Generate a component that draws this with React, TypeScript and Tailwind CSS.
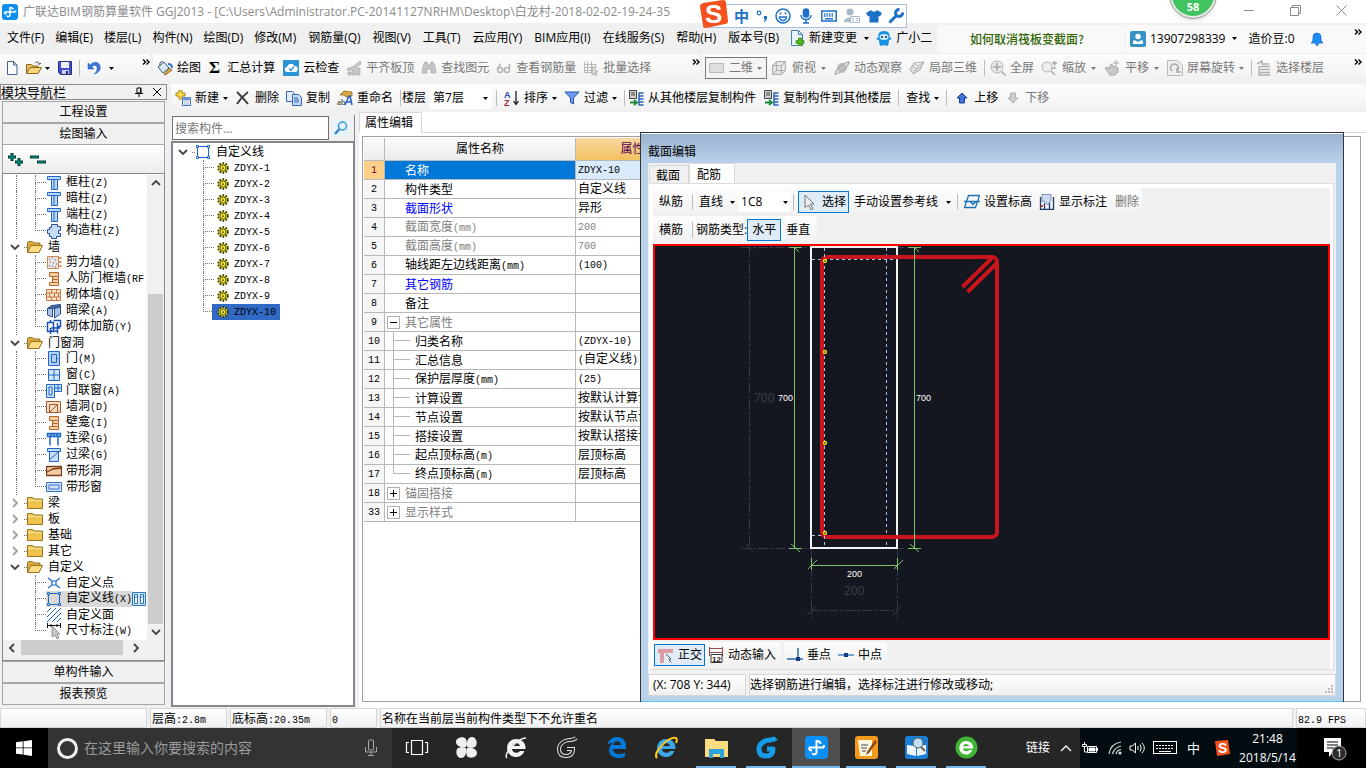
import type { ReactNode } from 'react'

type Row = {
  no: number
  name: string
  value?: string
  tone?: 'blue' | 'gray'
  child?: boolean
  last?: boolean
  sign?: '+' | '-'
}

type Leaf = { label: string; icon: string; active?: boolean }
type Group = { label?: string; open?: boolean; line?: boolean; items: Leaf[] }

const S = '#1e66c8'

const icons: Record<string, ReactNode> = {
  app: (
    <>
      <rect width="16" height="16" rx="3" fill="#0d8ff0" />
      <path d="M8 3v8c0 2-3 2-3 .5M8 3.500c2 0 3 .8 3 2M2.500 8h11M2.500 8c0 1.500 1 2 2 2M13.500 8V6.500" stroke="#fff" strokeWidth="1.500" fill="none" />
    </>
  ),
  file: <path d="M3.500 1.500h6l3.500 3.500v9.500H3.500zM9.500 1.500V5H13" fill="#fbfdff" stroke="#44618f" />,
  open: (
    <>
      <path d="M.5 13.500v-9h5l1.500 1.500h5v2" fill="#e9bd55" stroke="#8c6a1c" />
      <path d="M.5 13.500l3.500-6h11.500l-3.500 6z" fill="#f6d77b" stroke="#8c6a1c" />
      <path d="M9 3c2-2 4-1 4.500 1M12 3.500l1.500 1L15 3" fill="none" stroke="#555" />
    </>
  ),
  folderOpen: (
    <>
      <path d="M.5 13.500v-10l1-1h4l1.500 1.500h6v4" fill="#dca93c" stroke="#99741f" />
      <path d="M.5 13.500l3.500-7h11.500l-3.500 7z" fill="#f9dc84" stroke="#99741f" />
    </>
  ),
  save: (
    <>
      <path d="M1.500 1.500h13v13h-11l-2-2z" fill="#4652c4" stroke="#2a2f86" />
      <path d="M4 2h8v6H4z" fill="#eef1fb" />
      <path d="M5 10h7v4H5z" fill="#c9d0ea" />
      <path d="M9 11h2v3H9z" fill="#2a2f86" />
    </>
  ),
  undo: <path d="M2 3v6h6L5.800 6.800C8 4.500 12 5 11 9.500c-.3 2-1.500 3.500-3 4.500 4.500-1 7-4 6-8C13 1.500 7.500 1 4.200 5z" fill="#3c78dc" stroke="#1f4fa8" strokeWidth=".5" />,
  paint: (
    <>
      <path d="M1 7l6-5 5 6-6 5z" fill="#dbe6f3" stroke="#38587d" />
      <path d="M3 6c-1-4 2-6 4-3" stroke="#38587d" fill="none" />
      <path d="M8 13l5-5 2 2-5 4-3 1z" fill="#dca23a" stroke="#7b5a18" strokeWidth=".7" />
      <path d="M11 4c3 0 4 2 4 4" stroke="#3075d6" strokeWidth="2" fill="none" />
    </>
  ),
  cloud: (
    <>
      <rect width="16" height="16" fill="#2a94d6" />
      <path d="M4.500 12a2.500 2.500 0 0 1-.5-5 4 4 0 0 1 7.500-1A3 3 0 0 1 12 12z" fill="#fff" />
      <path d="M6 8.500l2 2 3-4" stroke="#2a94d6" fill="none" strokeWidth="1.300" />
    </>
  ),
  align: <path d="M1 9l7-3 6-5 1 3-6 4-7 3zM2 12h3v3H2zM6 10h3v5H6zM10 8h4v7h-4z" fill="#c6c6c6" stroke="#aaa" strokeWidth=".7" />,
  bino: <path d="M2 6l2-4h2l1 3h2l1-3h2l2 4 1 7h-5V9H6v4H1z" fill="#c4c4c4" stroke="#a8a8a8" strokeWidth=".7" />,
  glasses: (
    <g fill="none" stroke="#b4b4b4" strokeWidth="1.500">
      <circle cx="4" cy="10" r="2.500" />
      <circle cx="11" cy="10" r="2.500" />
      <path d="M6.500 10h2M1.500 9l3-5M13.500 9V4" />
    </g>
  ),
  batch: (
    <>
      <path d="M1.500 1.500v11h9M1.500 4.500h12M1.500 7.500h12M1.500 10.500h9M4.500 1.500v11M8.500 1.500v11M12.500 4v4" stroke="#b9b9b9" fill="none" />
      <path d="M9 6l6 6h-3l2 3-1.500.8L11 13l-2 2z" fill="#ddd" stroke="#999" strokeWidth=".7" />
    </>
  ),
  flat: <path d="M.5 3.500h14v9H.5z" fill="#dedede" stroke="#b9b9b9" />,
  cube: <path d="M1.500 5.500l4-4h9v9l-4 4h-9zM1.500 5.500h9v9M10.500 5.500l4-4M5.500 1.500v9h9M5.500 10.500l-4 4" fill="#e4e4e4" stroke="#adadad" />,
  planet: (
    <>
      <circle cx="8" cy="8" r="5" fill="#c2c2c2" />
      <path d="M1 14C4 15 15 6 15 2c-3 0-12 5-14 12z" fill="none" stroke="#aaa" strokeWidth="1.300" />
    </>
  ),
  local: <path d="M1 9l4-6 10-1-4 8-7 4zM5 3l4 3 6-4M9 6l-4 8M3 6l5 3 5-3" fill="#ddd" stroke="#b0b0b0" />,
  full: (
    <>
      <circle cx="7" cy="7" r="6" fill="#e9e9e9" stroke="#b4b4b4" />
      <path d="M7 3v8M3 7h8M11.500 11.500l4 4" stroke="#a6a6a6" strokeWidth="1.500" />
    </>
  ),
  zoom: (
    <>
      <circle cx="6" cy="7" r="5" fill="#ededed" stroke="#b4b4b4" />
      <path d="M10 11l4 4M11 3h5M13.500 1v5M11 8h4" stroke="#aaa" strokeWidth="1.500" />
    </>
  ),
  hand: <path d="M1 8l3-1 2 2V5l2-1 1 3 2-1 3 2v4l-3 3H6zM9 3h6M12 0v6" fill="#c8c8c8" stroke="#aaa" />,
  rotate: (
    <>
      <path d="M.5.5h10l5 5v10H.5z" fill="#eee" stroke="#b9b9b9" />
      <path d="M5 11a4 4 0 1 1 5 0M10 8v4h4" stroke="#a6a6a6" strokeWidth="1.500" fill="none" />
    </>
  ),
  floors: <path d="M1 4l5-3v3h7M4 6.500h10M4 9.500h10M4 12.500h10M3 6v9h11" fill="none" stroke="#b0b0b0" strokeWidth="1.500" />,
  create: (
    <>
      <path d="M4 0h3v3h3v3H7v3H4V6H1V3h3z" fill="#ffe14a" stroke="#957200" strokeWidth=".8" />
      <path d="M7.500 7.500h8v8h-8z" fill="#fff" stroke="#3b6fc0" />
      <path d="M8 8h7v2H8zM9 12h5M9 14h5" fill="#3b6fc0" stroke="#8fb0e2" />
    </>
  ),
  del: <path d="M2 2c3 3 7 7 11 12M13 2C9 5 5 9 2 14" stroke="#3b3b3b" strokeWidth="1.800" fill="none" />,
  copy: (
    <>
      <path d="M.5 1.500h6l2 2v8h-8z" fill="#e3edfb" stroke="#3565b5" />
      <path d="M6.500 4.500h6l3 3v8h-9zM8 8h4M8 10h5M8 12h5" fill="#c9dcf8" stroke="#3565b5" />
    </>
  ),
  rename: (
    <>
      <path d="M3 5l4-4 8 1v4l-6 1-2-2z" fill="#d9a640" stroke="#7d5913" strokeWidth=".7" />
      <text x="0" y="15" fontSize="9" fontFamily="Liberation Serif" fill="#222">ab</text>
      <path d="M8 15l4-9h1l2 9M10 12h4" stroke="#2c62c4" strokeWidth="1.600" fill="none" />
    </>
  ),
  sort: (
    <>
      <text x="0" y="8" fontSize="9" fontWeight="700" fontFamily="Liberation Sans" fill="#2346a5">A</text>
      <text x="0" y="16" fontSize="9" fontWeight="700" fontFamily="Liberation Sans" fill="#a03030">Z</text>
      <path d="M12 1v13M9.500 11l2.500 3.500 2.500-3.500" stroke="#111" fill="none" strokeWidth="1.200" />
    </>
  ),
  filter: <path d="M1 2h14L9.500 8v6l-3-1.500V8z" fill="#6b9df0" stroke="#2455ae" />,
  fromFloor: (
    <>
      <path d="M1.500.5h7v8h-7zM3 3h4M3 5h4" fill="#d2d2d2" stroke="#444" />
      <path d="M2 12.500h6M6 10l3 2.500L6 15" stroke="#1b8c3e" strokeWidth="1.800" fill="none" />
      <path d="M11 3h4.500M11 6h4.500M11 9h4.500M11 12h4.500M11 15h4.500M11 2.500v13" stroke="#2b62b8" strokeWidth="1.500" />
    </>
  ),
  up: <path d="M8 3l5 5h-2.500v5h-5V8H3z" fill="#3d74dd" stroke="#173f8e" />,
  down: <path d="M8 13l5-5h-2.500V3h-5v5H3z" fill="#cfcfcf" stroke="#b0b0b0" />,
  change: (
    <>
      <path d="M2.500.5h7l4 4v11h-11zM9.500.5v4h4" fill="#eaf4fc" stroke="#3f83b7" />
      <path d="M9.500 8h3v2.500H15v3h-2.500V16h-3v-2.500H7v-3h2.500z" fill="#53b61b" stroke="#2b7c09" strokeWidth=".6" />
    </>
  ),
  mascot: (
    <>
      <path d="M8 1c5 0 6 3 5.500 6L16 9l-3 1c0 3-1 6-2 6l-3-1-3 1c-1 0-2-3-2-6L0 9l2.500-2C2 4 3 1 8 1z" fill="#1793e0" />
      <ellipse cx="8" cy="7" rx="4.500" ry="3" fill="#c9ecff" />
      <circle cx="6" cy="7" r="1" fill="#134" />
      <circle cx="10" cy="7" r="1" fill="#134" />
    </>
  ),
  user: (
    <>
      <rect width="16" height="16" rx="2" fill="#3593c6" />
      <circle cx="8" cy="5.500" r="2.700" fill="#fff" />
      <path d="M3 13V9.500h2.500L8 11l2.500-1.500H13V13z" fill="#fff" />
    </>
  ),
  bell: <path d="M2 12c2-1 2-3 2-6a4 4 0 0 1 8 0c0 3 0 5 2 6H10l-2 3-2-3z" fill="#1f8cf5" stroke="#1463c4" strokeWidth=".7" />,
  column: <path d="M1.500 1.500h13v3h-3v10h-6v-10h-4zM6 4.500h5M8 5v9" fill="#bdd6fb" stroke={S} />,
  tectonic: <path d="M5.500 1.500h6v2h3v4h-2v3h2v3h-4v2h-5v-2h-2v-3h-2v-4h2v-2h2z" fill="#c6dcfb" stroke="#2a4f9a" />,
  shear: (
    <>
      <path d="M1.500 1.500h11v12h-11z" fill="#e9e4df" stroke="#c98a5a" />
      <path d="M3 4h1M6 3h1M9 5h1M4 7h1M7 8h1M10 9h1M3 11h1M6 11h1M9 12h1" stroke="#555" />
      <path d="M13 3h2.500M13 7h2.500M13 11h2.500" stroke="#e07030" strokeWidth="1.500" />
    </>
  ),
  frame: <path d="M3.500 1.500h9v13h-9v-3h3v-6h-3zM6.500 5.500h5M6.500 8.500h5M6.500 11.500h5" fill="#f5cfa5" stroke="#b3622a" />,
  brick: <path d="M.5 2.500h14v11H.5zM.5 6h14M.5 10h14M5.500 2.500V6M10.500 2.500V6M3.500 6v4M8.500 6v4M12.500 6v4M5.500 10v3.500M10.500 10v3.500" fill="#fbe2c8" stroke="#c47844" />,
  hidden: (
    <>
      <path d="M1.500 5.500l4-3 9-1v3l-9 1.500z" fill="#41699f" stroke="#2c4f86" />
      <path d="M1.500 5.500h5v8.500l-5-2zM8.500 5.500l6-1.500v7l-6 4z" fill="#a9c4ea" stroke="#2c4f86" />
    </>
  ),
  rebar: <path d="M1.500 3.500h6v9h-6zM4.500 1v3M4.500 9v6M7.500 1.500h7v6h-3v7M11.500 4v8h-8M14 9H5" fill="none" stroke="#1a4fb4" strokeWidth="1.500" />,
  door: <path d="M2.500.5h11v14h-11zM5.500 3.500h5v8h-5zM10 7.500h2" fill="#b3d0fa" stroke={S} />,
  window: <path d="M2.500 2.500h11v11h-11zM8 2.500v11M2.500 8h11" fill="#d3e5fd" stroke={S} />,
  doorWin: <path d="M.5 1.500h8v13h-8zM3 4h3v8H3zM8.500 1.500h7v7h-7zM12 1.500v7M8.500 5h7" fill="#cfe2fc" stroke={S} />,
  hole: <path d="M.5 2.500h14v11H.5zM3.500 5.500h8v8h-8zM4 13l7-7" fill="#f8dcc2" stroke="#9c5a30" />,
  link: <path d="M1.500 2.500h13v3h-13zM4 5.500v9M12 5.500v9M5 2.500v3M8 2.500v3M11 2.500v3" fill="#9fc3f7" stroke={S} strokeWidth="1.500" />,
  lintel: <path d="M1.500 1.500h13v3h-13zM3.500 4.500h9v10h-9zM4 12l4-3 4-4" fill="#c7dcfb" stroke={S} />,
  stripHole: <path d="M.5 3.500h15v9H.5zM1 9l6-3 8-1" fill="#f3c9a4" stroke="#7a4018" strokeWidth="1.300" />,
  stripWin: <path d="M.5 3.500h15v9H.5zM3 6h10v4H3z" fill="#cfe1fb" stroke="#3b6fc8" />,
  folder: (
    <>
      <path d="M.5 13.500v-11h5l1.500 1.500h8.500v9.500z" fill="#f0c34e" stroke="#99741f" />
      <path d="M1 5.500h14" stroke="#fbe7a6" />
    </>
  ),
  point: <path d="M2 3l4 3M14 3l-4 3M2 13l4-3M14 13l-4-3M6 6h4v4H6z" stroke={S} fill="none" strokeWidth="1.200" />,
  line: (
    <>
      <path d="M2.500 2.500h11v11h-11z" fill="none" stroke={S} />
      <path d="M1.500 1.500h2v2h-2zM12.500 1.500h2v2h-2zM1.500 12.500h2v2h-2zM12.500 12.500h2v2h-2z" fill="#fff" stroke={S} />
    </>
  ),
  area: <path d="M1 5l4-4M1 10l9-9M1 15L15 1M6 15l9-9M11 15l4-4" stroke={S} fill="none" />,
  dim: (
    <>
      <path d="M1 2.500h14M1.500 0v5M14.500 0v5M5 1v3M11 1v3" stroke="#111" />
      <path d="M6 3l8 8h-3l2 4-2 1-2-4-3 2z" fill="#c9c9c9" stroke="#777" strokeWidth=".7" />
    </>
  ),
  gear: (
    <>
      <circle cx="8" cy="8" r="5.500" fill="#f2ef2f" stroke="#33330a" strokeWidth="2" strokeDasharray="2 1.500" />
      <circle cx="8" cy="8" r="3.500" fill="#f2ef2f" stroke="#33330a" />
      <circle cx="8" cy="8" r="1" fill="#222" />
    </>
  ),
  cursor: <path d="M3 1l9 9H8.500l2.500 5-2 .8L6.700 11 3 13.500z" fill="#f0f0f0" stroke="#777" />,
  elev: <path d="M4.500 1.500h11l-4 12H.5zM0 7.500h16M6 7.500h6l-3 3z" fill="none" stroke="#1d73b8" strokeWidth="1.300" />,
  mark: (
    <>
      <path d="M1.500 3v12.500h13V3M5.500 9v6M10.500 9v6" fill="none" stroke="#1c3f6e" strokeWidth="1.300" />
      <path d="M3 .5h9v6L8.500 11 6 7.500H3z" fill="#cddcf2" stroke="#7d93b8" />
      <path d="M2 11h2v2H2z" fill="#d3441c" />
    </>
  ),
  ortho: (
    <>
      <path d="M0 2h15v4H6v10H2V6H0z" fill="#dc9ca0" />
      <path d="M8 7l5 5-2 .5 2 3" stroke="#555" fill="none" />
    </>
  ),
  dyn: (
    <>
      <path d="M1 1.500h14M1 5.500h14M1.500 0v9M14.500 0v9" stroke="#8e4c4c" />
      <path d="M3 7.500h11v8H3z" fill="#fff" stroke="#333" />
      <text x="4" y="15" fontSize="8" fontWeight="700" fontFamily="Liberation Sans" fill="#111">12</text>
    </>
  ),
  perp: (
    <>
      <path d="M11 1v11M0 12h16" stroke="#2a69ad" strokeWidth="1.500" />
      <path d="M9 10h4v4H9z" fill="#123b86" />
    </>
  ),
  mid: (
    <>
      <path d="M0 8h16" stroke="#4a86c8" strokeWidth="1.500" />
      <path d="M6 6h4v4H6z" fill="#123b86" />
    </>
  ),
  search: (
    <>
      <circle cx="9.500" cy="6" r="4" fill="#e8f4ff" stroke="#3d97dd" strokeWidth="1.500" />
      <path d="M6.500 9L2 14" stroke="#2f80c8" strokeWidth="2.200" />
    </>
  ),
}

function Icon({ name, className = 'size-4' }: { name: string; className?: string }) {
  return (
    <svg viewBox="0 0 16 16" className={`${className} shrink-0`} aria-hidden="true">
      {icons[name]}
    </svg>
  )
}

function Caret({ gray }: { gray?: boolean }) {
  return (
    <svg viewBox="0 0 5 3" className="h-[3px] w-[5px] shrink-0" aria-hidden="true">
      <path d="M0 0h5L2.500 3z" fill={gray ? '#777' : '#000'} />
    </svg>
  )
}

function More() {
  return (
    <button type="button" aria-label="更多" className="mb-3 w-2 shrink-0">
      <svg viewBox="0 0 8 7" className="h-[7px] w-2">
        <path d="M1 .5l2.500 2.500L1 5.500M4.500 .5L7 3 4.500 5.500" stroke="#000" strokeWidth="1.400" fill="none" />
      </svg>
    </button>
  )
}

function Sep() {
  return <span className="mx-[3px] h-4 w-px shrink-0 bg-[#bdbdbd]" />
}

type ToolProps = { icon?: string; label?: string; caret?: boolean; off?: boolean; on?: boolean; className?: string }

function Tool({ icon, label, caret, off, on, className = '' }: ToolProps) {
  return (
    <button
      type="button"
      aria-label={label ?? icon}
      className={`flex h-[22px] shrink-0 items-center gap-1 px-[3px] ${off ? 'text-[#777]' : ''} ${on ? 'border border-[#0078d7] bg-[#dfebf6]' : ''} ${className}`}
    >
      {icon ? <Icon name={icon} /> : null}
      {label}
      {caret ? <Caret gray={off} /> : null}
    </button>
  )
}

// Half-width characters sit on a 6px cell next to 12px ideographs.
function Song({ children }: { children: string }) {
  return (
    <>
      {children.split(/([\x20-\x7e]+)/).map((part, i) =>
        i % 2 ? (
          <span key={i} className="font-['Liberation_Mono',monospace] text-[10px] whitespace-pre">
            {part}
          </span>
        ) : (
          part
        ),
      )}
    </>
  )
}

const menus = [
  '文件(F)', '编辑(E)', '楼层(L)', '构件(N)', '绘图(D)', '修改(M)', '钢筋量(Q)', '视图(V)', '工具(T)',
  '云应用(Y)', 'BIM应用(I)', '在线服务(S)', '帮助(H)', '版本号(B)',
]

const groups: Group[] = [
  {
    line: true,
    items: [
      { label: '框柱(Z)', icon: 'column' },
      { label: '暗柱(Z)', icon: 'column' },
      { label: '端柱(Z)', icon: 'column' },
      { label: '构造柱(Z)', icon: 'tectonic' },
    ],
  },
  {
    label: '墙',
    open: true,
    line: true,
    items: [
      { label: '剪力墙(Q)', icon: 'shear' },
      { label: '人防门框墙(RF', icon: 'frame' },
      { label: '砌体墙(Q)', icon: 'brick' },
      { label: '暗梁(A)', icon: 'hidden' },
      { label: '砌体加筋(Y)', icon: 'rebar' },
    ],
  },
  {
    label: '门窗洞',
    open: true,
    line: true,
    items: [
      { label: '门(M)', icon: 'door' },
      { label: '窗(C)', icon: 'window' },
      { label: '门联窗(A)', icon: 'doorWin' },
      { label: '墙洞(D)', icon: 'hole' },
      { label: '壁龛(I)', icon: 'frame' },
      { label: '连梁(G)', icon: 'link' },
      { label: '过梁(G)', icon: 'lintel' },
      { label: '带形洞', icon: 'stripHole' },
      { label: '带形窗', icon: 'stripWin' },
    ],
  },
  { label: '梁', items: [] },
  { label: '板', items: [] },
  { label: '基础', items: [] },
  { label: '其它', items: [] },
  {
    label: '自定义',
    open: true,
    items: [
      { label: '自定义点', icon: 'point' },
      { label: '自定义线(X)', icon: 'line', active: true },
      { label: '自定义面', icon: 'area' },
      { label: '尺寸标注(W)', icon: 'dim' },
    ],
  },
]

const members = [1, 2, 3, 4, 5, 6, 7, 8, 9, 10].map((n) => `ZDYX-${n}`)

const rows: Row[] = [
  { no: 1, name: '名称', value: 'ZDYX-10' },
  { no: 2, name: '构件类型', value: '自定义线' },
  { no: 3, name: '截面形状', value: '异形', tone: 'blue' },
  { no: 4, name: '截面宽度(mm)', value: '200', tone: 'gray' },
  { no: 5, name: '截面高度(mm)', value: '700', tone: 'gray' },
  { no: 6, name: '轴线距左边线距离(mm)', value: '(100)' },
  { no: 7, name: '其它钢筋', tone: 'blue' },
  { no: 8, name: '备注' },
  { no: 9, name: '其它属性', tone: 'gray', sign: '-' },
  { no: 10, name: '归类名称', value: '(ZDYX-10)', child: true },
  { no: 11, name: '汇总信息', value: '(自定义线)', child: true },
  { no: 12, name: '保护层厚度(mm)', value: '(25)', child: true },
  { no: 13, name: '计算设置', value: '按默认计算设置', child: true },
  { no: 14, name: '节点设置', value: '按默认节点设置', child: true },
  { no: 15, name: '搭接设置', value: '按默认搭接设置', child: true },
  { no: 16, name: '起点顶标高(m)', value: '层顶标高', child: true },
  { no: 17, name: '终点顶标高(m)', value: '层顶标高', child: true, last: true },
  { no: 18, name: '锚固搭接', tone: 'gray', sign: '+' },
  { no: 33, name: '显示样式', tone: 'gray', sign: '+' },
]

function Chevron({ dir, light }: { dir: 'down' | 'right' | 'up' | 'left'; light?: boolean }) {
  const d = { down: 'M1 3l4 4 4-4', up: 'M1 7l4-4 4 4', right: 'M3 1l4 4-4 4', left: 'M7 1L3 5l4 4' }[dir]
  return (
    <svg viewBox="0 0 10 10" className="size-[10px] shrink-0" aria-hidden="true">
      <path d={d} fill="none" stroke={light ? '#a0a0a0' : '#444'} strokeWidth="1.800" />
    </svg>
  )
}

function Branch({ last }: { last: boolean }) {
  return (
    <span className="flex h-4 w-[11px] shrink-0 flex-col">
      <span className="h-2 border-b border-l border-dotted border-[#777]" />
      <span className={`h-2 ${last ? '' : 'border-l border-dotted border-[#777]'}`} />
    </span>
  )
}

function ModuleTree() {
  return (
    <div className="min-w-0 flex-1 overflow-hidden">
      {groups.map((group, g) => (
        <div key={g}>
          {group.label ? (
            <div className="flex h-4 items-center pl-[6px]">
              <Chevron dir={group.open ? 'down' : 'right'} light={!group.open} />
              <span className="ml-1 w-[3px] border-b border-dotted border-[#777]" />
              <Icon name={group.open ? 'folderOpen' : 'folder'} />
              <span className="ml-[5px]">{group.label}</span>
            </div>
          ) : null}
          {group.items.map((item, i) => (
            <div key={item.label} className="flex h-4 items-center pl-3">
              <span className={`h-4 w-[19px] shrink-0 ${group.line ? 'border-l border-dotted border-[#777]' : ''}`} />
              <Branch last={i === group.items.length - 1} />
              <span className={`flex h-4 items-center gap-1 ${item.active ? 'bg-[#d9d9d9]' : ''}`}>
                <Icon name={item.icon} />
                <span>
                  <Song>{item.label}</Song>
                </span>
              </span>
              {item.active ? (
                <svg viewBox="0 0 14 14" className="size-[14px] shrink-0" aria-hidden="true">
                  <path d="M.5.500h13v13H.5z" fill="#cfe6fa" stroke="#2a78bb" />
                  <path d="M2.500 2.500h3v9h-3zM8.500 2.500h3v9h-3zM2.500 5h3M8.500 5h3" fill="#fff" stroke="#2a78bb" />
                </svg>
              ) : null}
            </div>
          ))}
        </div>
      ))}
    </div>
  )
}

function NavButton({ children }: { children: string }) {
  return (
    <button type="button" className="h-[22px] w-full shrink-0 border border-[#a6a6a6] bg-[#f0f0f0] text-center">
      {children}
    </button>
  )
}

function ModuleNav() {
  return (
    <aside className="flex w-[167px] shrink-0 flex-col">
      <header className="flex h-4 items-center border border-[#8c8c8c] text-[13px] leading-[14px]">
        <h2 className="flex-1">模块导航栏</h2>
        <button type="button" aria-label="固定" className="w-[18px]">
          <svg viewBox="0 0 10 10" className="size-[10px]">
            <path d="M3 1h4v5H3zM1 6.500h8M5 7v3M6.500 1v5" fill="none" stroke="#000" />
          </svg>
        </button>
        <button type="button" aria-label="关闭" className="w-[14px]">
          <svg viewBox="0 0 10 10" className="size-[10px]">
            <path d="M1 1l8 8M9 1L1 9" stroke="#000" />
          </svg>
        </button>
      </header>
      <div className="flex flex-1 flex-col pt-px pr-[2px] pb-[3px] pl-[2px]">
        <NavButton>工程设置</NavButton>
        <NavButton>绘图输入</NavButton>
        <div className="flex h-7 items-center gap-1 border-x border-[#a6a6a6] bg-linear-to-b from-white to-[#ececec] px-1">
          <button type="button" aria-label="全部展开">
            <svg viewBox="0 0 18 16" className="h-4 w-[18px]">
              <path d="M1 6h8M5 2v8M8 11h8M12 7v8" stroke="#003a35" strokeWidth="3" />
              <path d="M2 6h6M5 3v6M9 11h6M12 8v6" stroke="#00a08e" />
            </svg>
          </button>
          <button type="button" aria-label="全部折叠">
            <svg viewBox="0 0 18 16" className="h-4 w-[18px]">
              <path d="M1 6h9M8 11h9" stroke="#003a35" strokeWidth="3" />
              <path d="M2 6h7M9 11h7" stroke="#00a08e" />
            </svg>
          </button>
        </div>
        <div className="flex flex-1 flex-col border border-[#828790] bg-white pt-px">
          <div className="flex flex-1 pl-px">
            <ModuleTree />
            <div className="flex w-[17px] flex-col items-center bg-[#f0f0f0]">
              <span className="flex h-4 items-center">
                <Chevron dir="up" />
              </span>
              <span className="flex-1" />
              <span className="h-[330px] w-[15px] bg-[#cdcdcd]" />
              <span className="flex h-4 items-center">
                <Chevron dir="down" />
              </span>
            </div>
          </div>
          <div className="flex h-5 items-start bg-[#f0f0f0] pl-1">
            <span className="flex h-4 items-center">
              <Chevron dir="left" />
            </span>
            <span className="ml-1 h-[15px] w-[102px] bg-[#cdcdcd]" />
            <span className="ml-2 flex h-4 items-center">
              <Chevron dir="right" />
            </span>
          </div>
        </div>
        <NavButton>单构件输入</NavButton>
        <NavButton>报表预览</NavButton>
      </div>
    </aside>
  )
}

function MemberList() {
  return (
    <section className="mt-[3px] mb-px flex w-[184px] shrink-0 flex-col">
      <div className="flex h-[26px] items-center border-r border-[#828790] pl-px">
        <input
          aria-label="搜索构件"
          placeholder="搜索构件..."
          className="h-6 w-[157px] border border-[#707070] bg-white px-[2px] placeholder:text-[#777]"
        />
        <button type="button" aria-label="搜索" className="ml-1 bg-[#e6f3fd]">
          <Icon name="search" />
        </button>
      </div>
      <div className="flex-1 border-2 border-[#828790] bg-white pt-px">
        <div className="flex h-4 items-center pl-[5px]">
          <Chevron dir="down" />
          <span className="ml-1 w-[3px] border-b border-dotted border-[#777]" />
          <Icon name="line" />
          <span className="ml-[5px]">自定义线</span>
        </div>
        {members.map((m, i) => (
          <div key={m} className="flex h-4 items-center pl-[30px]">
            <Branch last={i === members.length - 1} />
            <span className={`-ml-[2px] flex h-4 items-center gap-1 px-1 ${m === 'ZDYX-10' ? 'bg-[#316ac5]' : ''}`}>
              <Icon name="gear" className="size-[14px]" />
              <span>
                <Song>{m}</Song>
              </span>
            </span>
          </div>
        ))}
      </div>
    </section>
  )
}

const headCell = 'h-[23px] border-r border-b border-[#b8b8b8] bg-linear-to-b from-[#fafafa] to-[#ececec] font-normal'

function PropertyTable() {
  return (
    <table className="w-[338px] table-fixed border-separate border-spacing-0">
      <colgroup>
        <col className="w-[21px]" />
        <col className="w-[191px]" />
        <col className="w-[126px]" />
      </colgroup>
      <thead>
        <tr>
          <th className={headCell} aria-label="序号" />
          <th className={headCell}>属性名称</th>
          <th className="h-[23px] border-r border-b border-[#b8b8b8] bg-linear-to-b from-[#f9d9a0] to-[#f2c15f] font-normal text-[#500050]">
            属性值
          </th>
        </tr>
      </thead>
      <tbody>
        {rows.map((r) => {
          const tone = r.tone === 'blue' ? 'text-[#0000ff]' : r.tone === 'gray' ? 'text-[#808080]' : ''
          const picked = r.no === 1
          return (
            <tr key={r.no} className="h-[19px]">
              <td className={`border-r border-b border-[#b8b8b8] text-center ${picked ? 'bg-[#fdd08a] text-[#700030]' : 'bg-[#f6f6f6]'}`}>
                <Song>{String(r.no)}</Song>
              </td>
              <td className={`border-r border-b border-[#b8b8b8] ${picked ? 'bg-[#0078d7] text-white' : tone}`}>
                <div className="flex h-[18px] items-center">
                  {r.child ? (
                    <span className="ml-2 flex h-[18px] w-[17px] flex-col">
                      <span className="h-[9px] border-b border-l border-[#b8b8b8]" />
                      <span className={`h-[9px] ${r.last ? '' : 'border-l border-[#b8b8b8]'}`} />
                    </span>
                  ) : r.sign ? (
                    <button
                      type="button"
                      aria-label={r.sign === '+' ? '展开' : '折叠'}
                      className="ml-[2px] flex size-[13px] items-center justify-center border border-[#b0b0b0] bg-white"
                    >
                      <svg viewBox="0 0 9 9" className="size-[9px]">
                        <path d={r.sign === '+' ? 'M1 4.500h7M4.500 1v7' : 'M1 4.500h7'} stroke="#000" />
                      </svg>
                    </button>
                  ) : null}
                  <span className={`pt-[2px] ${r.child || r.sign ? 'pl-[5px]' : 'pl-5'}`}>
                    <Song>{r.name}</Song>
                  </span>
                </div>
              </td>
              <td className={`border-r border-b border-[#b8b8b8] pl-[2px] ${picked ? 'bg-[#d9eafa]' : r.tone === 'gray' ? tone : ''}`}>
                <Song>{r.value ?? ''}</Song>
              </td>
            </tr>
          )
        })}
      </tbody>
    </table>
  )
}

function SectionDrawing() {
  return (
    <svg className="size-full" aria-label="截面配筋图">
      <g stroke="#343a46" fill="none">
        <path d="M94.500 1v302M86 1.500h69M86 302.500h69M243 1.500h6M243 302.500h6" strokeDasharray="10 2 3 2" />
        <path d="M156.500 303v70M242.500 303v70M156 364.500h87" strokeDasharray="10 2 3 2" />
        <path d="M90 297l8 9M90 -3l8 8M152 369l9-9M238 369l9-9" />
      </g>
      <rect x="156" y="1" width="86" height="301" fill="none" stroke="#f4f4f4" strokeWidth="2" />
      <g stroke="#a9c6ee" strokeDasharray="3 3" fill="none">
        <path d="M231.500 2v300M157 13.500h85M157 289.500h10" />
      </g>
      <g fill="none" stroke="#cb151c" strokeWidth="4">
        <rect x="167" y="11" width="175" height="280" rx="5" />
        <path d="M307.500 41L337 12M312.500 46L342 17" />
      </g>
      <path d="M169.500 2v300" stroke="#a9c6ee" strokeDasharray="3 3" />
      <g stroke="#7cc36a" fill="none">
        <path d="M139.500 1v302M134 1.500h13M134 302.500h13M136 298l9 8M139 1l5 5" />
        <path d="M259.500 1v302M253 1.500h13M253 302.500h13M255 298l9 8M259 1l5 5" />
        <path d="M156 319.500h87M156.500 312v12M242.500 312v12M153 323l9-9M239 323l9-9" />
      </g>
      <g fill="#222" stroke="#f4e420" strokeWidth="1.300">
        <circle cx="170" cy="15" r="1.500" />
        <circle cx="170" cy="106" r="1.500" />
        <circle cx="170" cy="197" r="1.500" />
        <circle cx="170" cy="287" r="1.500" />
      </g>
      <g fill="#fff" className="font-['Liberation_Sans',sans-serif] text-[9px]">
        <text x="123" y="155">700</text>
        <text x="261" y="155">700</text>
        <text x="192" y="331">200</text>
      </g>
      <g fill="#3a3f4a" className="font-['Noto_Sans',sans-serif] text-[12px]">
        <text x="99" y="156">700</text>
        <text x="189" y="349">200</text>
      </g>
    </svg>
  )
}

const bar = 'flex items-center rounded-r-sm bg-linear-to-b from-[#fdfdfd] to-[#f0f0f0]'
const statusCell = 'border border-[#d6d6d6] bg-linear-to-b from-white to-[#f0f0f0]'

function SectionDialog() {
  return (
    <div
      role="dialog"
      aria-label="截面编辑"
      className="absolute top-5 right-[22px] bottom-[6px] left-[281px] flex flex-col border border-[#333] bg-[#b9d1ea]"
    >
      <h2 className="flex h-[30px] shrink-0 items-center border-t border-white bg-linear-to-b from-[#9ab3d0] to-[#b9d1ea] pt-[6px] pl-[7px] text-[12px]">
        截面编辑
      </h2>
      <div className="mr-[7px] ml-[7px] flex flex-1 flex-col bg-[#f0f0f0]">
        <div role="tablist" className="flex h-5 items-end pl-px font-['Noto_Sans_CJK_SC',sans-serif]">
          <button type="button" role="tab" className="h-[18px] w-10 border border-b-0 border-[#d9d9d9] bg-[#f0f0f0] pr-[2px] leading-4">
            截面
          </button>
          <button type="button" role="tab" aria-selected="true" className="h-5 w-[46px] border border-b-0 border-[#d9d9d9] bg-white pr-[6px] leading-4">
            配筋
          </button>
        </div>
        <div className="mr-[2px] ml-px flex flex-1 flex-col border border-[#dcdcdc] border-l-white bg-white px-[3px] pt-1">
          <div className="bg-[#f0f0f0]">
            <div className="flex">
              <div className={`${bar} h-7 pl-[3px]`}>
                <Tool label="纵筋" className="mr-[3px]" />
                <Sep />
                <Tool label="直线" caret className="gap-[7px]" />
                <label className="flex items-center gap-1 bg-white py-[2px] pl-[3px]">
                  <select aria-label="钢筋规格" className="w-9 appearance-none bg-white">
                    <option>1C8</option>
                  </select>
                  <span className="px-[2px]">
                    <Caret />
                  </span>
                </label>
                <Sep />
                <Tool icon="cursor" label="选择" on className="ml-px w-[51px]" />
                <Tool label="手动设置参考线" caret className="ml-[2px] gap-2" />
                <Sep />
                <Tool icon="elev" label="设置标高" />
                <Tool icon="mark" label="显示标注" className="ml-px" />
                <Tool label="删除" off className="ml-[2px]" />
              </div>
            </div>
            <div className="flex">
              <div className={`${bar} h-7 pr-1 pl-[3px]`}>
                <Tool label="横筋" className="mr-[3px]" />
                <Sep />
                <span>钢筋类型:</span>
                <Tool label="水平" on className="w-[34px] justify-center" />
                <Tool label="垂直" className="ml-[2px]" />
              </div>
            </div>
          </div>
          <div className="h-[396px] min-h-0 flex-auto border-2 border-[#ff0000] bg-[#14171f]">
            <SectionDrawing />
          </div>
          <div className="flex h-[29px] shrink-0 items-center bg-[#f0f0f0]">
            <div className={`${bar} h-[26px] pr-[2px]`}>
              <Tool icon="ortho" label="正交" on className="ml-px w-[51px]" />
              <Tool icon="dyn" label="动态输入" />
            </div>
            <div className={`${bar} ml-[3px] h-[26px] pr-[2px]`}>
              <Tool icon="perp" label="垂点" />
              <Tool icon="mid" label="中点" className="ml-px" />
            </div>
          </div>
        </div>
        <footer className="mt-1 flex h-[22px] shrink-0 gap-[3px]">
          <p className={`${statusCell} w-[98px] pl-1 leading-5`}>(X: 708 Y: 344)</p>
          <p className={`${statusCell} flex flex-1 items-end justify-between leading-5`}>
            <span>选择钢筋进行编辑，选择标注进行修改或移动;</span>
            <svg viewBox="0 0 12 12" className="size-3" aria-hidden="true">
              <path d="M8 2h2v2H8zM8 5h2v2H8zM8 8h2v2H8zM5 5h2v2H5zM5 8h2v2H5zM2 8h2v2H2z" fill="#bbb" />
            </svg>
          </p>
        </footer>
      </div>
      <div className="h-[6px] shrink-0 border-b border-[#5cc8ee]" />
    </div>
  )
}

function PropertyPanel() {
  return (
    <section className="relative ml-1 flex min-w-0 flex-1 flex-col bg-white">
      <div className="flex h-[21px] border-b border-[#d9d9d9]">
        <button type="button" className="-mb-px h-[21px] w-[63px] border-x border-t border-[#d9d9d9] bg-white pr-[3px] pb-px">
          属性编辑
        </button>
      </div>
      <div className="mt-[3px] mr-[5px] mb-[6px] ml-[3px] flex-1 border border-[#a0a0a0] pt-px pl-px">
        <PropertyTable />
      </div>
      <SectionDialog />
    </section>
  )
}

function ImeBar() {
  return (
    <div className="absolute top-0 left-[699px] flex h-7 items-center">
      <svg viewBox="0 0 30 28" className="z-10 h-7 w-[30px]" aria-hidden="true">
        <path d="M4 3L24 0q3 0 3 3l2 18q0 3-3 3L7 28q-3 0-3-3L1 7q0-3 3-4z" fill="#f4511e" />
        <text x="6" y="23" fontSize="26" fontWeight="700" fontFamily="Liberation Sans" fill="#fff">S</text>
      </svg>
      <div className="-ml-[26px] mt-[3px] flex h-6 w-[204px] items-center gap-[7px] border border-[#a9bfdc] bg-white pl-[30px] text-[#1c70c8]">
        <span className="text-[15px] leading-5 font-bold">中</span>
        <svg viewBox="0 0 12 16" className="h-4 w-3" aria-hidden="true">
          <circle cx="3" cy="5" r="1.800" fill="none" stroke="currentColor" strokeWidth="1.200" />
          <path d="M8 8h3v3l-2 3H8l1-3H8z" fill="currentColor" />
        </svg>
        <svg viewBox="0 0 16 16" className="size-4" fill="none" stroke="currentColor" strokeWidth="1.500" aria-hidden="true">
          <circle cx="8" cy="8" r="7" />
          <path d="M4.500 9a3.500 3.500 0 0 0 7 0zM5.500 4.500v2M10.500 4.500v2" />
        </svg>
        <svg viewBox="0 0 16 16" className="size-4" fill="none" stroke="currentColor" strokeWidth="1.500" aria-hidden="true">
          <rect x="5.500" y="1" width="5" height="8" rx="2.500" fill="currentColor" />
          <path d="M3 7c0 6 10 6 10 0M8 11.500V15M5 15h6" />
        </svg>
        <svg viewBox="0 0 16 16" className="size-4" fill="none" stroke="currentColor" strokeWidth="1.500" aria-hidden="true">
          <rect x=".8" y="3" width="14.400" height="10" />
          <path d="M3 6h10M3 8h10" strokeDasharray="1.500 1" />
          <path d="M4 10.800h8" />
        </svg>
        <svg viewBox="0 0 16 16" className="size-4" fill="#a9b9cc" aria-hidden="true">
          <circle cx="6" cy="4" r="3.500" />
          <path d="M0 14c0-6 12-6 12 0z" />
          <path d="M6.500 8.500h9v6h-9zM8 10.500h2M8 12.500h2M12 10.500h2M12 12.500h2" stroke="#a9b9cc" fill="#fff" />
        </svg>
        <svg viewBox="0 0 16 16" className="-ml-px size-4" fill="currentColor" aria-hidden="true">
          <path d="M5 2c1 2 5 2 6 0l5 3-2 3.500-1.500-.5v6.500h-9V8L2 8.500 0 5z" />
        </svg>
        <svg viewBox="0 0 16 16" className="-ml-px size-4" fill="none" stroke="currentColor" strokeWidth="3" aria-hidden="true">
          <path d="M1.500 14.500l7-7M14.500 4.500a3.500 3.500 0 1 1-3-3" />
        </svg>
      </div>
    </div>
  )
}

function TitleBar() {
  return (
    <header className="relative flex h-[23px] shrink-0 items-center bg-white pl-[2px]">
      <Icon name="app" />
      <h1 className="ml-[5px] text-[12px] text-[#8b8b8b]">
        广联达BIM钢筋算量软件 GGJ2013 - [C:\Users\Administrator.PC-20141127NRHM\Desktop\白龙村-2018-02-02-19-24-35
      </h1>
      <span className="flex-1" />
      <div className="mr-[19px] flex items-center gap-[35px] pb-[2px] text-[#8b8b8b]">
        <button type="button" aria-label="最小化">
          <svg viewBox="0 0 11 11" className="size-[11px]"><path d="M0 5.500h10" stroke="currentColor" /></svg>
        </button>
        <button type="button" aria-label="还原">
          <svg viewBox="0 0 11 11" className="size-[11px]"><path d="M.5 2.500h8v8h-8zM2.500 2.500v-2h8v8h-2" stroke="currentColor" fill="none" /></svg>
        </button>
        <button type="button" aria-label="关闭">
          <svg viewBox="0 0 11 11" className="size-[11px]"><path d="M.5.500l10 10M10.500.500l-10 10" stroke="currentColor" /></svg>
        </button>
      </div>
      <ImeBar />
      <div className="absolute -top-7 right-[150px] flex size-[46px] items-end justify-center rounded-full border-2 border-[#e6e6e6] bg-[#41c35f] pb-px text-[11px] leading-4 font-bold text-white shadow-md outline outline-[#8fa598]">
        58
      </div>
    </header>
  )
}

function MenuRow() {
  return (
    <div className="flex h-[30px] shrink-0 items-center bg-[#f0f0f0]">
      <nav className="flex w-[937px] shrink-0 items-center gap-[11px] pl-[7px]">
        {menus.map((m, i) => (
          <button type="button" key={m} className={i > 5 ? 'ml-px' : ''}>
            {m}
          </button>
        ))}
        <span className="-ml-1 flex items-center">
          <Tool icon="change" label="新建变更" />
          <span className="ml-1">
            <Caret />
          </span>
          <Tool icon="mascot" label="广小二" className="ml-1" />
        </span>
      </nav>
      <a href="#help" className="mt-px flex h-[28px] w-[188px] items-center justify-center bg-[#f9f9f9] pr-2 font-['Noto_Sans_CJK_SC',sans-serif] font-medium text-[#2f6400]">
        如何取消筏板变截面?
      </a>
      <div className="mt-px ml-px flex h-[28px] flex-1 items-center bg-[#f9f9f9] pr-1 pl-px">
        <Tool icon="user" label="13907298339" />
        <span className="ml-1">
          <Caret />
        </span>
        <Tool label="造价豆:0" className="mx-2" />
        <Tool icon="bell" />
        <span className="flex-1" />
        <More />
      </div>
    </div>
  )
}

function ViewRow() {
  return (
    <div className="flex h-[30px] shrink-0 items-center gap-[3px] bg-[#f0f0f0] py-px">
      <div className={`${bar} h-7 w-[150px] shrink-0 pl-px`}>
        <Tool icon="file" />
        <Tool icon="open" />
        <Caret />
        <Tool icon="save" className="ml-1" />
        <Sep />
        <Tool icon="undo" />
        <span className="ml-1">
          <Caret />
        </span>
        <span className="flex-1" />
        <More />
      </div>
      <div className={`${bar} h-7 w-[547px] shrink-0 gap-px pl-px`}>
        <Tool icon="paint" label="绘图" />
        <button type="button" className="flex items-center gap-[7px] px-1">
          <span className="font-['Liberation_Serif',serif] text-[17px] leading-5 font-bold">Σ</span>汇总计算
        </button>
        <Tool icon="cloud" label="云检查" />
        <Tool icon="align" label="平齐板顶" off />
        <Tool icon="bino" label="查找图元" off />
        <Tool icon="glasses" label="查看钢筋量" off />
        <Tool icon="batch" label="批量选择" off />
        <span className="flex-1" />
        <More />
      </div>
      <div className={`${bar} h-7 min-w-0 flex-1 gap-px pr-1 pl-[2px]`}>
        <Tool icon="flat" label="二维" caret off className="w-[62px] border border-[#777] bg-[#f4f4f4]" />
        <Tool icon="cube" label="俯视" caret off className="w-[62px] gap-[5px]" />
        <Tool icon="planet" label="动态观察" off />
        <Tool icon="local" label="局部三维" off />
        <Sep />
        <Tool icon="full" label="全屏" off className="-ml-[2px]" />
        <Tool icon="zoom" label="缩放" caret off className="w-[62px] gap-[5px]" />
        <Tool icon="hand" label="平移" caret off className="w-[62px] gap-[5px]" />
        <Tool icon="rotate" label="屏幕旋转" caret off />
        <Sep />
        <Tool icon="floors" label="选择楼层" off className="-ml-[3px]" />
        <span className="flex-1" />
        <More />
      </div>
    </div>
  )
}

function MemberToolbar() {
  return (
    <div className={`${bar} h-[28px] shrink-0 gap-px pl-px`}>
      <Tool icon="create" label="新建" caret />
      <Tool icon="del" label="删除" />
      <Tool icon="copy" label="复制" />
      <Tool icon="rename" label="重命名" />
      <Sep />
      <label className="-ml-[3px] flex items-center gap-1">
        楼层
        <span className="flex h-[22px] w-[62px] items-center bg-white pr-1 pl-[3px]">
          <select className="min-w-0 flex-1 appearance-none bg-white">
            <option>第7层</option>
          </select>
          <Caret />
        </span>
      </label>
      <Sep />
      <Tool icon="sort" label="排序" caret />
      <Tool icon="filter" label="过滤" caret />
      <Sep />
      <Tool icon="fromFloor" label="从其他楼层复制构件" className="-ml-1" />
      <Tool icon="fromFloor" label="复制构件到其他楼层" />
      <Sep />
      <Tool label="查找" caret />
      <Sep />
      <Tool icon="up" label="上移" />
      <Tool icon="down" label="下移" off />
    </div>
  )
}

function StatusBar() {
  const cell = `${statusCell} pl-px leading-[18px]`
  return (
    <footer className="flex h-5 shrink-0 gap-[3px] font-['Noto_Sans_CJK_SC',sans-serif]">
      <p className={`${cell} w-[147px]`} />
      <p className={`${cell} w-[77px]`}><Song>层高:2.8m</Song></p>
      <p className={`${cell} w-[97px]`}><Song>底标高:20.35m</Song></p>
      <p className={`${cell} w-[47px]`}><Song>0</Song></p>
      <p className={`${cell} flex-1`}>名称在当前层当前构件类型下不允许重名</p>
      <p className={`${cell} w-[70px]`}><Song>82.9 FPS</Song></p>
    </footer>
  )
}

const swirl = 'M22 3c-3 3-7 1-11 3-4 2-6 5-6 8 0 5 3 7 7 7 5 0 7-3 7-7h-6'

const blueE = (
  <path d="M3 10C5 4 9 2 13 2c6 0 9 4 9 9v3H9c0 3 3 5 6 5 2 0 4-.5 6-1.500v4c-2 1-4 1.500-7 1.500-6 0-9-4-9-8 0-3 2-6 4-7 0 0-4 0-6 2zm6 0h8c0-5-7-5-8 0z" />
)

const ringE = (
  <path d="M12 4a9 9 0 1 0 8.500 12H16c-2 3-8 2-8-2h13.500C22 8 18 4 12 4zM8 11c1-4 7-4 8 0z" />
)

const taskApps: { name: string; art: ReactNode; run?: boolean; active?: boolean }[] = [
  {
    name: '任务视图',
    art: <path d="M7.500 5.500h11v14h-11zM5 7.500H2.500v10H5M21 7.500h2.500v10H21" fill="none" stroke="#fff" strokeWidth="1.200" />,
  },
  {
    name: '风车',
    art: (
      <g fill="#efefef">
        <path d="M12 12C7 13 2 11 2 7c0-5 8-6 10-3 1 2 1 5 0 8zM13 12c-1-5 1-10 5-10 5 0 6 8 3 10-2 1-5 1-8 0zM13 13c5-1 10 1 10 5 0 5-8 6-10 3-1-2-1-5 0-8zM12 13c1 5-1 10-5 10-5 0-6-8-3-10 2-1 5-1 8 0z" />
      </g>
    ),
  },
  {
    name: '浏览器',
    art: (
      <>
        <g fill="#f2f2f2">{ringE}</g>
        <path d="M3 23C-1 19 14 3 22 3" fill="none" stroke="#f2f2f2" strokeWidth="1.500" />
      </>
    ),
  },
  {
    name: '广联达',
    art: (
      <g fill="none">
        <path d={swirl} stroke="#e6e6e6" strokeWidth="4" />
        <path d={swirl} stroke="#262626" strokeWidth="2" />
      </g>
    ),
  },
  { name: 'Edge', art: <g fill="#0078d7">{blueE}</g> },
  {
    name: 'Internet Explorer',
    art: (
      <>
        <g fill="#3ba7ea">{ringE}</g>
        <path d="M3 23C-2 18 15 1 22 3c1 1 1 3 0 5" fill="none" stroke="#f9c927" strokeWidth="2" />
      </>
    ),
  },
  {
    name: '文件资源管理器',
    run: true,
    art: (
      <>
        <path d="M1 4h9l2 2h12v16H1z" fill="#fbdc80" />
        <path d="M5 23v-9h15v9h-4v-4H9v4z" fill="#2ba4dc" />
      </>
    ),
  },
  { name: '广联达云', run: true, art: <path d={swirl} fill="none" stroke="#159be8" strokeWidth="5" strokeLinejoin="round" /> },
  {
    name: 'GGJ2013',
    run: true,
    active: true,
    art: (
      <>
        <rect x="1" y="1" width="23" height="23" rx="4" fill="#0b8ff5" />
        <path d="M12.500 5v12c0 3-4 3-4 1M12.500 6c3 0 4 1 4 3M5 12.500h15M5 12.500c0 2 1 3 3 3M20 12.500V10" fill="none" stroke="#fff" strokeWidth="2" />
      </>
    ),
  },
  {
    name: '便笺',
    run: true,
    art: (
      <>
        <rect x="1" y="1" width="23" height="23" rx="3" fill="#f39a1d" />
        <path d="M4 5h14v16H6z" fill="#fff6df" />
        <path d="M7 10h7M7 13h6M8 16h4" stroke="#444" />
        <path d="M21 5l-8 12-1 3 3-2 8-11z" fill="#8a4a12" />
      </>
    ),
  },
  {
    name: '图库',
    run: true,
    art: (
      <>
        <rect x="1" y="1" width="23" height="23" rx="3" fill="#1b7fd6" />
        <path d="M3 10l9 1v10l-9-2zM13 11l9-1v9l-9 2z" fill="#eef6fd" />
        <circle cx="14" cy="8" r="5" fill="#bfe0f7" stroke="#6b5d4d" />
        <path d="M17 12l4 4" stroke="#6b5d4d" strokeWidth="2" />
      </>
    ),
  },
  {
    name: '360浏览器',
    run: true,
    art: (
      <>
        <circle cx="12.500" cy="12.500" r="11" fill="#3fb536" />
        <g fill="#fff" transform="translate(3 3) scale(.75)">{ringE}</g>
      </>
    ),
  },
]

function Taskbar() {
  return (
    <footer className="flex h-10 shrink-0 bg-[#262626] text-white">
      <button type="button" aria-label="开始" className="flex w-12 items-center justify-center bg-black">
        <svg viewBox="0 0 16 16" className="size-4" fill="#fff">
          <path d="M0 2.300L6.700 1.300v6.200H0zM7.500 1.200L16 0v7.500H7.500zM0 8.300h6.700v6.300L0 13.700zM7.500 8.300H16V16l-8.500-1.200z" />
        </svg>
      </button>
      <label className="flex w-[344px] items-center bg-[#333] pl-[9px]">
        <span className="size-[21px] rounded-full border-3 border-[#eee]" />
        <input
          aria-label="搜索"
          placeholder="在这里输入你要搜索的内容"
          className="ml-[6px] min-w-0 flex-1 bg-transparent text-[14px] placeholder:text-[#9b9b9b]"
        />
        <svg viewBox="0 0 12 18" className="mr-[15px] h-[18px] w-3" fill="none" stroke="#aaa" aria-hidden="true">
          <rect x="3.500" y="1" width="5" height="10" rx="1" />
          <path d="M.5 8v5h11V8M6 13v4M3 16.500h6" />
        </svg>
      </label>
      <div className="flex">
        {taskApps.map((app) => (
          <button
            type="button"
            key={app.name}
            aria-label={app.name}
            className={`mr-[2px] flex w-[48px] flex-col items-center ${app.active ? 'bg-[#4f4f4f]' : ''}`}
          >
            <svg viewBox="0 0 25 25" className="mt-[7px] mb-[6px] size-[25px]">
              {app.art}
            </svg>
            {app.run ? <span className={`h-[2px] bg-[#76b9ed] ${app.active ? 'w-full' : 'w-10'}`} /> : null}
          </button>
        ))}
      </div>
      <span className="flex-1" />
      <div className="flex items-center gap-[10px] pr-2">
        <span>链接</span>
        <svg viewBox="0 0 12 8" className="h-2 w-3" fill="none" stroke="#fff" strokeWidth="1.300"><path d="M1 7l5-5 5 5" /></svg>
      </div>
      <div className="flex w-[217px] items-center bg-[#030d11] pl-[2px]">
        <svg viewBox="0 0 16 16" className="size-4" fill="none" stroke="#fff"><path d="M5.500 6.500h9v6h-9zM15.500 8v3M2.500 2v3M.5 4.500h4v2h-4zM2.500 7v5H5" /><path d="M7 8h6v3H7z" fill="#fff" /></svg>
        <svg viewBox="0 0 16 16" className="ml-[9px] size-4" fill="none" stroke="#ddd" strokeWidth="1.200"><path d="M2 14C3 7 8 3 14 2M5.500 14c1-4 4-7 8.500-8M9 14c.5-2 2-4 5-4.500" /><circle cx="13" cy="13" r="1" fill="#ddd" /></svg>
        <svg viewBox="0 0 16 16" className="ml-[6px] size-4" fill="none" stroke="#fff"><path d="M1 6h2.500l3-3v10l-3-3H1zM9 6v4M11 4.500c1.500 2 1.500 5 0 7M13 3c3 3 3 7 0 10" /></svg>
        <svg viewBox="0 0 24 14" className="ml-2 h-[14px] w-6" fill="none" stroke="#fff"><rect x=".5" y=".5" width="23" height="12" /><path d="M3 4.500h18M3 7.500h18" strokeDasharray="2 1" /><path d="M6 10.500h12" /></svg>
        <span className="ml-[10px] text-[13px]">中</span>
        <svg viewBox="0 0 16 16" className="ml-[14px] size-4"><path d="M1 1l13-1 2 14-13 2z" fill="#f4511e" /><text x="4" y="13" fontSize="14" fontWeight="700" fontFamily="Liberation Sans" fill="#fff">S</text></svg>
        <div className="flex-1 pl-2 text-center leading-[19px]">
          <p>21:48</p>
          <p>2018/5/14</p>
        </div>
      </div>
      <button type="button" aria-label="通知" className="flex w-[69px] items-center justify-center bg-black pl-1">
        <svg viewBox="0 0 26 26" className="size-[26px]">
          <path d="M3 3h17v14h-8l-4 5v-5H3z" fill="#fff" />
          <path d="M6 7h11M6 10h11M6 13h7" stroke="#000" />
          <circle cx="18" cy="18" r="7" fill="#2b2b2b" stroke="#aaa" />
          <text x="15" y="22" fontSize="11" fontFamily="Open Sans" fill="#fff">1</text>
        </svg>
      </button>
    </footer>
  )
}

export default function App() {
  return (
    <div className="flex min-h-screen flex-col overflow-hidden bg-[#f0f0f0] font-['Open_Sans','Noto_Sans_CJK_SC',sans-serif] text-[12px] leading-4 whitespace-nowrap text-black">
      <TitleBar />
      <MenuRow />
      <ViewRow />
      <main className="flex flex-1 pt-px">
        <ModuleNav />
        <div className="ml-1 flex min-w-0 flex-1 flex-col">
          <MemberToolbar />
          <div className="flex flex-1">
            <MemberList />
            <PropertyPanel />
          </div>
        </div>
      </main>
      <StatusBar />
      <Taskbar />
    </div>
  )
}
